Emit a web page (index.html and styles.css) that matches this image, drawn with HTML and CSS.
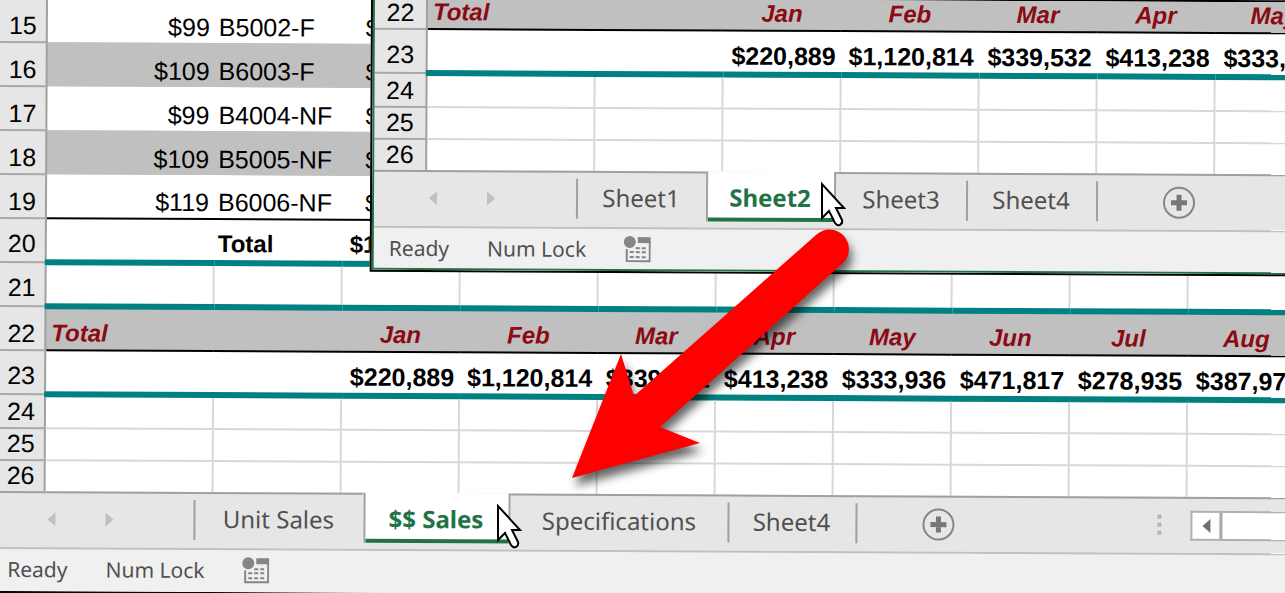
FILE: index.html
```html
<!DOCTYPE html>
<html lang="en">
<head>
<meta charset="utf-8">
<title>Sales workbook</title>
<link rel="stylesheet" href="styles.css">
</head>
<body>
<svg class="defs" aria-hidden="true">
  <symbol id="prev" viewBox="0 0 10 16"><path d="M9 1v14L1 8z"/></symbol>
  <symbol id="next" viewBox="0 0 10 16"><path d="M1 1v14l8-7z"/></symbol>
  <symbol id="add" viewBox="0 0 34 34"><circle cx="17" cy="17" r="15" fill="none" stroke="#858585" stroke-width="2"/><path d="M17 9v16M9 17h16" fill="none" stroke="#777" stroke-width="5"/></symbol>
  <symbol id="macro" viewBox="0 0 27 28"><circle cx="6" cy="7" r="6" fill="#858585"/><path d="M14 2h13v6H14z" fill="#858585"/><path d="M3 14V26H26V7" fill="none" stroke="#858585" stroke-width="2"/><path d="M12 13h12M6 17h18M6 22h18" fill="none" stroke="#858585" stroke-width="2" stroke-dasharray="4 2"/></symbol>
  <symbol id="pointer" viewBox="-2 -3 28 48"><path d="M0 0V34L7 27L13 39Q15 42 18 41Q21 39 20 36L14 24H22Z" fill="#fff" stroke="#000" stroke-width="2"/></symbol>
</svg>
<main class="stage">
  <div class="desk">
    <section class="book" aria-label="Renamed sheets">
      <table class="grid">
        <colgroup><col class="c-head"><col class="c-name"><col class="c-model"><col class="c-month"><col class="c-wide"><col class="c-month"><col class="c-month"><col class="c-month"><col class="c-month"><col class="c-month"><col class="c-month"></colgroup>
        <tbody>
        <tr class="item"><th scope="row">15</th><td class="num">$99</td><td>B5002-F</td><td class="cut">$</td><td colspan="7"></td></tr>
        <tr class="item band"><th scope="row">16</th><td class="num">$109</td><td>B6003-F</td><td class="cut">$</td><td colspan="7"></td></tr>
        <tr class="item"><th scope="row">17</th><td class="num">$99</td><td>B4004-NF</td><td class="cut">$</td><td colspan="7"></td></tr>
        <tr class="item band"><th scope="row">18</th><td class="num">$109</td><td>B5005-NF</td><td class="cut">$</td><td colspan="7"></td></tr>
        <tr class="item ruled"><th scope="row">19</th><td class="num">$119</td><td>B6006-NF</td><td class="cut">$</td><td colspan="7"></td></tr>
        <tr class="sum teal"><th scope="row">20</th><td></td><td class="label">Total</td><td class="cut-sum">$1</td><td colspan="7"></td></tr>
        <tr class="open teal"><th scope="row">21</th><td></td><td></td><td></td><td></td><td></td><td></td><td></td><td></td><td></td><td></td></tr>
        <tr class="months ruled"><th scope="row">22</th><td class="first" colspan="2">Total</td><td>Jan</td><td>Feb</td><td>Mar</td><td>Apr</td><td>May</td><td>Jun</td><td>Jul</td><td>Aug</td></tr>
        <tr class="values teal"><th scope="row">23</th><td colspan="2"></td><td>$220,889</td><td>$1,120,814</td><td>$339,532</td><td>$413,238</td><td>$333,936</td><td>$471,817</td><td>$278,935</td><td>$387,976</td></tr>
        <tr class="open tall"><th scope="row">24</th><td></td><td></td><td></td><td></td><td></td><td></td><td></td><td></td><td></td><td></td></tr>
        <tr class="open short"><th scope="row">25</th><td></td><td></td><td></td><td></td><td></td><td></td><td></td><td></td><td></td><td></td></tr>
        <tr class="open last"><th scope="row">26</th><td></td><td></td><td></td><td></td><td></td><td></td><td></td><td></td><td></td><td></td></tr>
        </tbody>
      </table>
      <nav class="tabs">
        <div class="steps"><button aria-label="Previous sheet"><svg><use href="#prev"/></svg></button><button aria-label="Next sheet"><svg><use href="#next"/></svg></button></div>
        <button class="tab w-unit">Unit Sales</button><button class="tab w-sales active">$$ Sales</button><button class="tab w-spec">Specifications</button><button class="tab w-last">Sheet4</button>
        <div class="rest"><button class="add" aria-label="New sheet"><svg><use href="#add"/></svg></button>
          <span class="dots"><i></i><i></i><i></i></span>
          <div class="scroll"><button aria-label="Scroll left"><svg><use href="#prev"/></svg></button><span class="thumb"></span></div>
        </div>
      </nav>
      <footer class="status"><span>Ready</span><span>Num Lock</span><button aria-label="Record macro"><svg><use href="#macro"/></svg></button></footer>
    </section>

    <section class="book inset" aria-label="Original sheets">
      <table class="grid">
        <colgroup><col class="c-head-wide"><col class="c-name"><col class="c-model"><col class="c-month"><col class="c-wide"><col class="c-month"><col class="c-month"><col class="c-month"></colgroup>
        <tbody>
        <tr class="months ruled clipped"><th scope="row">22</th><td class="first" colspan="2">Total</td><td>Jan</td><td>Feb</td><td>Mar</td><td>Apr</td><td>May</td></tr>
        <tr class="values teal"><th scope="row">23</th><td colspan="2"></td><td>$220,889</td><td>$1,120,814</td><td>$339,532</td><td>$413,238</td><td>$333,936</td></tr>
        <tr class="open tall"><th scope="row">24</th><td></td><td></td><td></td><td></td><td></td><td></td><td></td></tr>
        <tr class="open short"><th scope="row">25</th><td></td><td></td><td></td><td></td><td></td><td></td><td></td></tr>
        <tr class="open last"><th scope="row">26</th><td></td><td></td><td></td><td></td><td></td><td></td><td></td></tr>
        </tbody>
      </table>
      <nav class="tabs">
        <div class="steps"><button aria-label="Previous sheet"><svg><use href="#prev"/></svg></button><button aria-label="Next sheet"><svg><use href="#next"/></svg></button></div>
        <button class="tab">Sheet1</button><button class="tab active">Sheet2</button><button class="tab">Sheet3</button><button class="tab">Sheet4</button>
        <div class="rest"><button class="add" aria-label="New sheet"><svg><use href="#add"/></svg></button></div>
      </nav>
      <footer class="status"><span>Ready</span><span>Num Lock</span><button aria-label="Record macro"><svg><use href="#macro"/></svg></button></footer>
    </section>
  </div>

  <svg class="pointer on-sheet2" aria-hidden="true"><use href="#pointer"/></svg>
  <svg class="pointer on-sales" aria-hidden="true"><use href="#pointer"/></svg>
  <svg class="arrow" viewBox="0 0 300 270" aria-hidden="true"><path d="M12 258L61 134L74 176L256 15A19 19 0 0 1 283 43L100 207L140 223Z" fill="#f00"/></svg>
</main>
</body>
</html>
```
FILE: styles.css
```css
html, body {
  margin: 0;
  height: 100%;
  overflow: hidden;
  background: #fff;
}

.defs { display: none; }

.stage {
  position: relative;
  min-height: 100%;
  overflow: hidden;
}

/* The two windows sit slightly tilted, like a photographed desk */
.desk {
  position: relative;
  margin: -2px -8px 0 0;
  transform: rotate(0.28deg);
  transform-origin: 0 0;
}

.book {
  overflow: hidden;
  background: #fff;
  border-bottom: 2px solid #000;
}

.inset {
  position: absolute;
  top: -4px;
  left: 371px;
  right: 0;
  border: 2px solid #000;
}

.inset::after {
  content: "";
  position: absolute;
  inset: 0;
  border-left: 2px solid #217346;
  border-bottom: 2px solid #217346;
  pointer-events: none;
}

.inset > .grid,
.inset > .tabs,
.inset > .status { margin-left: 2px; }

/* Grid */
.grid {
  table-layout: fixed;
  border-collapse: collapse;
  width: 0;
  font: 25px/26px "Liberation Sans", Arial, sans-serif;
  color: #000;
}

.c-head { width: 47px; }
.c-head-wide { width: 52px; }
.c-name { width: 168px; }
.c-model { width: 128px; }
.c-month { width: 118px; }
.c-wide { width: 138px; }

.grid tr { height: 44px; }
.grid tr.tall { height: 34px; }
.grid tr.short { height: 32px; }
.grid tr.clipped,
.grid tr.last { height: 31px; }

.grid th,
.grid td {
  padding: 0 4px 3px;
  vertical-align: bottom;
  white-space: nowrap;
}

.grid th {
  padding: 0 0 3px;
  font-weight: normal;
  text-align: center;
  background: #e6e6e6;
  border-right: 2px solid #a0a0a0;
  border-bottom: 2px solid #a8a8a8;
}

.grid .teal th { padding-bottom: 5px; }
.band td { background: #c0c0c0; box-shadow: 2px 0 #c0c0c0; }
.ruled td { border-bottom: 2px solid #000; }
.open td { border: 2px solid #d8d8d8; }
.teal td { border-bottom: 6px solid #008080; }
.grid .last th, .grid .last td { border-bottom: 0; }

.grid td.num { padding-right: 5px; text-align: right; }
.grid td.cut { padding-left: 23px; }
.grid td.cut-sum { padding-left: 8px; }
.sum td { font-size: 24px; font-weight: bold; }

.months td {
  font-size: 24px;
  font-weight: bold;
  font-style: italic;
  text-align: center;
  color: #8b0a14;
  background: #c0c0c0;
  box-shadow: 2px 0 #c0c0c0;
}

.grid .months td.first { padding-left: 5px; text-align: left; }

.grid .values td {
  padding-right: 5px;
  font-weight: bold;
  text-align: right;
}

/* Sheet tabs */
button {
  padding: 0;
  border: 0;
  background: none;
  font: inherit;
  color: inherit;
}

svg { display: block; }

.tabs {
  display: flex;
  align-items: flex-start;
  height: 56px;
  background: #e6e6e6;
  font: 24px/32px "Noto Sans", "Open Sans", sans-serif;
  color: #505050;
}

.steps {
  display: flex;
  align-items: flex-start;
  gap: 48px;
  box-sizing: border-box;
  width: 196px;
  height: 56px;
  padding: 18px 0 0 49px;
  border-top: 2px solid #a0a0a0;
  fill: #c0c0c0;
}

.inset .steps { width: 202px; padding-left: 54px; }

.steps svg { width: 10px; height: 16px; }

.tab {
  position: relative;
  box-sizing: border-box;
  width: 130px;
  height: 50px;
  padding-top: 2px;
  border-top: 2px solid #a0a0a0;
  white-space: nowrap;
}

.tab::before,
.tab:last-of-type::after {
  content: "";
  position: absolute;
  top: 6px;
  bottom: 2px;
  left: 0;
  width: 2px;
  background: #a0a0a0;
}

.tab:last-of-type::after { left: 100%; }
.active + .tab::before { content: none; }

.w-unit { width: 170px; }
.w-sales { width: 147px; }
.w-spec { width: 217px; }
.w-last { width: 128px; }

.active {
  padding: 2px 2px 0 0;
  border: solid #a0a0a0;
  border-width: 0 2px;
  background: linear-gradient(#217346, #217346) bottom / 100% 4px no-repeat #fff;
  font-weight: bold;
  color: #217346;
}

.active::before { content: none; }

.rest {
  display: flex;
  align-items: flex-start;
  flex: 1;
  box-sizing: border-box;
  height: 56px;
  padding-left: 66px;
  border-top: 2px solid #a0a0a0;
}

.add { margin-top: 10px; }
.add svg { width: 34px; height: 34px; }

.dots {
  display: grid;
  gap: 4px;
  margin: 16px 29px 0 auto;
}

.dots i {
  width: 4px;
  height: 4px;
  background: #b4b4b4;
}

.scroll {
  display: flex;
  box-sizing: border-box;
  width: 100px;
  height: 30px;
  margin-top: 12px;
  border: 2px solid #b0b0b0;
  border-right: 0;
  background: #fff;
  fill: #707070;
}

.scroll button { width: 27px; }
.scroll svg { width: 10px; height: 16px; margin: auto; }
.thumb { flex: 1; border-left: 3px solid #a8a8a8; }

/* Status bar */
.status {
  display: flex;
  align-items: flex-start;
  gap: 38px;
  box-sizing: border-box;
  height: 44px;
  padding: 6px 0 0 10px;
  border-top: 2px solid #c0c0c0;
  background: #f0f0f0;
  font: 21px/28px "Noto Sans", "Open Sans", sans-serif;
  color: #505050;
}

.inset .status { padding-left: 15px; }

.status svg { width: 27px; height: 28px; }

/* Overlays */
.pointer {
  position: absolute;
  width: 28px;
  height: 48px;
}

.on-sheet2 { left: 820px; top: 181px; }
.on-sales { left: 496px; top: 503px; }

.arrow {
  position: absolute;
  left: 560px;
  top: 220px;
  width: 300px;
  height: 270px;
  overflow: visible;
  filter: drop-shadow(3px 8px 5px rgba(0, 0, 0, 0.6));
}
```
